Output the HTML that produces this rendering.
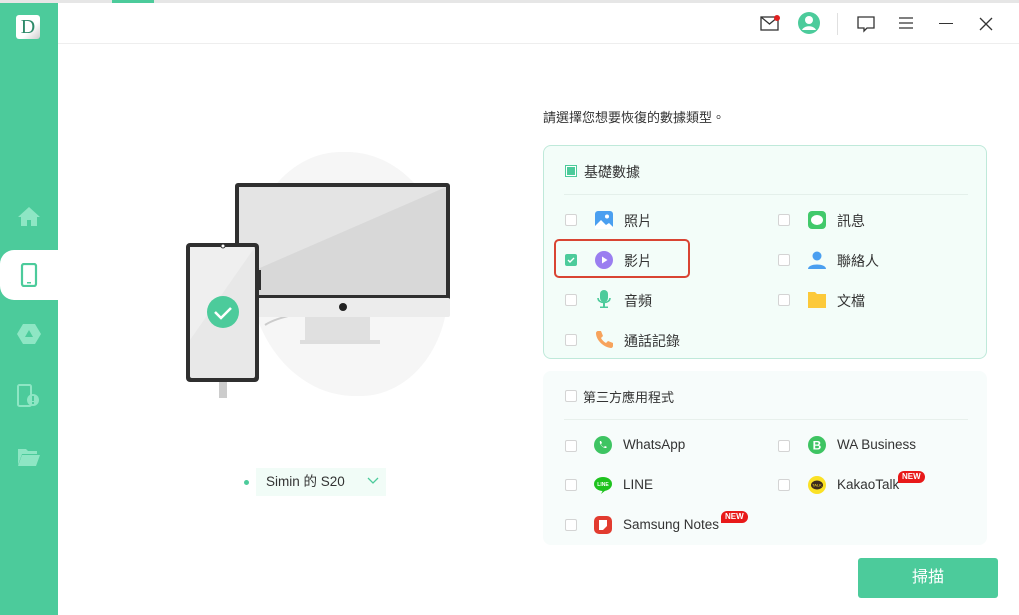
<!DOCTYPE html><html><head><meta charset="utf-8"><style>
*{margin:0;padding:0;box-sizing:border-box}
body{width:1019px;height:615px;overflow:hidden;background:#fff;font-family:"Liberation Sans","Noto Sans CJK TC",sans-serif;color:#333;position:relative}
.abs{position:absolute}
.cb{position:absolute;width:12px;height:12px;border:1px solid #d4d4d4;background:#fff;border-radius:2px}
.lbl{position:absolute;font-size:14px;color:#333}
.en{font-size:13.5px}
.ic{position:absolute;width:18px;height:18px}
.new{position:absolute;background:#e81919;color:#fff;font-size:8px;font-weight:bold;padding:1px 4px;border-radius:7px 7px 7px 0;line-height:10px}
</style></head><body>
<div class="abs" style="left:0;top:0;width:1019px;height:3px;background:#e6e6e6"></div>
<div class="abs" style="left:112px;top:0;width:42px;height:3px;background:#4ccb9b"></div>
<div class="abs" style="left:0;top:3px;width:58px;height:612px;background:#4ccb9b"></div>
<div class="abs" style="left:16px;top:15px;width:24px;height:24px;background:linear-gradient(135deg,#fff 60%,#ccc);border-radius:3px;font-family:'Liberation Serif',serif;font-size:20px;color:#2e8a6a;text-align:center;line-height:24px">D</div>
<div class="abs" style="left:58px;top:43px;width:961px;height:1px;background:#eee"></div>
<svg class="abs" style="left:17px;top:205px" width="24" height="24" viewBox="0 0 24 24"><path d="M12 2L1 12h3v9h6v-6h4v6h6v-9h3z" fill="#8ee6c4"/></svg>
<div class="abs" style="left:0;top:250px;width:58px;height:50px;background:#fff;border-radius:14px 0 0 14px"></div>
<svg class="abs" style="left:19px;top:263px" width="20" height="24" viewBox="0 0 20 24"><rect x="3" y="1" width="14" height="22" rx="2" fill="none" stroke="#4ccb9b" stroke-width="2.2"/><rect x="8" y="19" width="4" height="1.5" fill="#4ccb9b"/></svg>
<svg class="abs" style="left:16px;top:322px" width="26" height="24" viewBox="0 0 26 24"><path d="M7 2h12l6 10-6 10H7L1 12z" fill="#8ee6c4"/><path d="M13 8l4 7H9z" fill="#4ccb9b"/></svg>
<svg class="abs" style="left:16px;top:383px" width="26" height="26" viewBox="0 0 26 26"><rect x="2" y="2" width="13" height="21" rx="1.5" fill="none" stroke="#8ee6c4" stroke-width="2"/><circle cx="17" cy="17" r="6" fill="#8ee6c4"/><rect x="16" y="13" width="2" height="5" fill="#4ccb9b"/><rect x="16" y="19" width="2" height="2" fill="#4ccb9b"/></svg>
<svg class="abs" style="left:17px;top:446px" width="24" height="22" viewBox="0 0 24 22"><path d="M1 3h8l2 2h9v3H5L1 19z" fill="#8ee6c4"/><path d="M5 9h18l-4 11H1z" fill="#8ee6c4"/></svg>
<svg class="abs" style="left:760px;top:14px" width="22" height="18" viewBox="0 0 22 18"><rect x="1" y="3" width="17" height="13" fill="none" stroke="#333" stroke-width="1.3"/><path d="M1 3l8.5 7L18 3" fill="none" stroke="#333" stroke-width="1.3"/><circle cx="17" cy="4" r="3" fill="#e02020"/></svg>
<svg class="abs" style="left:798px;top:12px" width="22" height="22" viewBox="0 0 22 22"><circle cx="11" cy="11" r="11" fill="#4ccb9b"/><circle cx="11" cy="8" r="4" fill="#fff"/><path d="M4 18c2-5 12-5 14 0" fill="#fff"/></svg>
<div class="abs" style="left:837px;top:13px;width:1px;height:22px;background:#e0e0e0"></div>
<svg class="abs" style="left:856px;top:15px" width="20" height="18" viewBox="0 0 20 18"><path d="M2 2h16v11h-7l-3 3v-3H2z" fill="none" stroke="#333" stroke-width="1.3"/></svg>
<svg class="abs" style="left:897px;top:16px" width="18" height="14" viewBox="0 0 18 14"><path d="M2 2h14M2 7h14M2 12h14" stroke="#333" stroke-width="1.3"/></svg>
<div class="abs" style="left:939px;top:23px;width:14px;height:1.3px;background:#333"></div>
<svg class="abs" style="left:978px;top:16px" width="16" height="16" viewBox="0 0 16 16"><path d="M2 2l12 12M14 2L2 14" stroke="#333" stroke-width="1.3"/></svg>
<div class="abs" style="left:248px;top:152px;width:200px;height:244px;background:#f6f6f6;border-radius:48% 52% 45% 55%"></div>
<svg class="abs" style="left:170px;top:140px" width="300" height="270" viewBox="0 0 300 270">
<path d="M95 185 C110 175 140 172 175 165 L230 160" stroke="#ccc" stroke-width="2" fill="none"/>
<rect x="135" y="172" width="65" height="32" fill="#e0e0e0"/>
<rect x="130" y="200" width="80" height="4" fill="#ddd"/>
<rect x="65" y="43" width="215" height="118" rx="3" fill="#2f2f2f"/>
<rect x="69" y="47" width="207" height="108" fill="#d8d8d8"/>
<path d="M69 47h207l-207 90z" fill="#e4e4e4"/>
<rect x="65" y="158" width="215" height="19" rx="2" fill="#ececec"/>
<circle cx="173" cy="167" r="4" fill="#222"/>
<rect x="16" y="103" width="73" height="139" rx="4" fill="#2f2f2f"/>
<rect x="20" y="107" width="65" height="131" rx="2" fill="#e8e8e8"/>
<path d="M20 107h65L20 200z" fill="#efefef"/>
<circle cx="53" cy="106" r="2" fill="#fff" stroke="#2f2f2f"/>
<rect x="88" y="130" width="3" height="20" fill="#2f2f2f"/>
<rect x="49" y="242" width="8" height="16" fill="#ccc"/>
<circle cx="53" cy="172" r="16" fill="#4ccb9b"/>
<path d="M45 172l6 6 10-10" stroke="#fff" stroke-width="2.5" fill="none"/>
</svg>
<div class="abs" style="left:244px;top:480px;width:5px;height:5px;border-radius:50%;background:#4ccb9b"></div>
<div class="abs" style="left:256px;top:468px;width:130px;height:28px;background:#f1fcf7;font-size:13.5px;line-height:28px;padding-left:10px">Simin 的 S20</div>
<svg class="abs" style="left:367px;top:477px" width="12" height="8" viewBox="0 0 12 8"><path d="M1 1l5 5 5-5" stroke="#4ccb9b" stroke-width="1.3" fill="none"/></svg>
<div class="abs" style="left:543px;top:107px;font-size:13px;color:#333">請選擇您想要恢復的數據類型。</div>
<div class="abs" style="left:543px;top:145px;width:444px;height:214px;background:#f3fdf9;border:1px solid #bfe9da;border-radius:8px"></div>
<div class="abs" style="left:565px;top:165px;width:12px;height:12px;border:1px solid #4ccb9b;background:#fff"><div style="margin:1px;width:8px;height:8px;background:#4ccb9b"></div></div>
<div class="lbl" style="left:584px;top:162px">基礎數據</div>
<div class="abs" style="left:564px;top:194px;width:404px;height:1px;background:#e4f0eb"></div>
<div class="cb" style="left:565px;top:214px"></div>
<svg class="ic" style="left:595px;top:211px" viewBox="0 0 18 18"><rect width="18" height="18" rx="3" fill="#4a9ff0"/><circle cx="12" cy="5.5" r="2" fill="#fff"/><path d="M0 15l6-6 5 5 3-2 4 4v2H0z" fill="#fff"/></svg>
<div class="lbl" style="left:624px;top:211px">照片</div>
<div class="cb" style="left:778px;top:214px"></div>
<svg class="ic" style="left:808px;top:211px" viewBox="0 0 18 18"><rect width="18" height="18" rx="4" fill="#42c96b"/><ellipse cx="9" cy="9" rx="6" ry="5" fill="#fff"/></svg>
<div class="lbl" style="left:837px;top:211px">訊息</div>
<div class="abs" style="left:554px;top:239px;width:136px;height:39px;border:2.5px solid #d94433;border-radius:5px"></div>
<div class="abs" style="left:565px;top:254px;width:12px;height:12px;background:#4ccb9b;border-radius:2px"></div>
<svg class="abs" style="left:566px;top:255px" width="10" height="10" viewBox="0 0 10 10"><path d="M2 5l2 2 4-4" stroke="#fff" stroke-width="1.4" fill="none"/></svg>
<svg class="ic" style="left:595px;top:251px" viewBox="0 0 18 18"><circle cx="9" cy="9" r="9" fill="#9a7ef0"/><path d="M7 5.5v7l5.5-3.5z" fill="#fff"/></svg>
<div class="lbl" style="left:624px;top:251px">影片</div>
<div class="cb" style="left:778px;top:254px"></div>
<svg class="ic" style="left:808px;top:251px" viewBox="0 0 18 18"><circle cx="9" cy="5" r="4.5" fill="#4a9ff0"/><path d="M0 18c0-6 18-6 18 0z" fill="#4a9ff0"/></svg>
<div class="lbl" style="left:837px;top:251px">聯絡人</div>
<div class="cb" style="left:565px;top:294px"></div>
<svg class="ic" style="left:595px;top:290px" viewBox="0 0 18 18"><rect x="5" y="0" width="8" height="12" rx="4" fill="#4ccb9b"/><path d="M3 8c0 6 12 6 12 0" stroke="#4ccb9b" stroke-width="1.6" fill="none"/><rect x="8" y="13" width="2" height="4" fill="#4ccb9b"/><rect x="5" y="16.5" width="8" height="1.5" fill="#4ccb9b"/></svg>
<div class="lbl" style="left:624px;top:291px">音頻</div>
<div class="cb" style="left:778px;top:294px"></div>
<svg class="ic" style="left:808px;top:290px" viewBox="0 0 18 18"><path d="M0 2h7l2 2h9v14H0z" fill="#fcc93a"/></svg>
<div class="lbl" style="left:837px;top:291px">文檔</div>
<div class="cb" style="left:565px;top:334px"></div>
<svg class="ic" style="left:595px;top:330px" viewBox="0 0 18 18"><path d="M3 1l3 0 2 5-2 2c1 2 3 4 5 5l2-2 5 2v3c0 1-1 2-2 2C8 17 1 10 1 3c0-1 1-2 2-2z" fill="#f7a35c"/></svg>
<div class="lbl" style="left:624px;top:331px">通話記錄</div>
<div class="abs" style="left:543px;top:371px;width:444px;height:174px;background:#f7fcfb;border-radius:8px"></div>
<div class="cb" style="left:565px;top:390px"></div>
<div class="lbl" style="left:583px;top:387px;font-size:13px">第三方應用程式</div>
<div class="abs" style="left:564px;top:419px;width:404px;height:1px;background:#e8f0ec"></div>
<div class="cb" style="left:565px;top:440px"></div>
<svg class="ic" style="left:594px;top:436px" viewBox="0 0 18 18"><circle cx="9" cy="9" r="9" fill="#3ec462"/><path d="M6 5c-1 2 2 7 6 7l1-1-2-1-1 1c-1 0-3-2-3-3l1-1-1-2z" fill="#fff"/></svg>
<div class="lbl en" style="left:623px;top:437px">WhatsApp</div>
<div class="cb" style="left:778px;top:440px"></div>
<svg class="ic" style="left:808px;top:436px" viewBox="0 0 18 18"><circle cx="9" cy="9" r="9" fill="#3ec462"/><text x="9" y="13.5" font-size="12" font-weight="bold" fill="#fff" text-anchor="middle" font-family="Liberation Sans">B</text></svg>
<div class="lbl en" style="left:837px;top:437px">WA Business</div>
<div class="cb" style="left:565px;top:479px"></div>
<svg class="ic" style="left:594px;top:476px" viewBox="0 0 18 18"><ellipse cx="9" cy="8" rx="9" ry="7" fill="#1ec31e"/><path d="M9 14l-2 4 5-4z" fill="#1ec31e"/><text x="9" y="10" font-size="5" font-weight="bold" fill="#fff" text-anchor="middle" font-family="Liberation Sans">LINE</text></svg>
<div class="lbl en" style="left:623px;top:477px">LINE</div>
<div class="cb" style="left:778px;top:479px"></div>
<svg class="ic" style="left:808px;top:476px" viewBox="0 0 18 18"><circle cx="9" cy="9" r="9" fill="#fbe125"/><ellipse cx="9" cy="9" rx="6" ry="4.5" fill="#3c2a1e"/><text x="9" y="10.5" font-size="4" fill="#fbe125" text-anchor="middle" font-family="Liberation Sans">TALK</text></svg>
<div class="lbl en" style="left:837px;top:477px">KakaoTalk</div>
<div class="new" style="left:898px;top:471px">NEW</div>
<div class="cb" style="left:565px;top:519px"></div>
<svg class="ic" style="left:594px;top:516px" viewBox="0 0 18 18"><rect width="18" height="18" rx="5" fill="#e23b2f"/><path d="M5 4h8v6l-4 4H5z" fill="#fff"/></svg>
<div class="lbl en" style="left:623px;top:517px">Samsung Notes</div>
<div class="new" style="left:721px;top:511px">NEW</div>
<div class="abs" style="left:858px;top:558px;width:140px;height:40px;background:#4ccb9b;border-radius:3px;color:#fff;font-size:16px;text-align:center;line-height:40px">掃描</div>
</body></html>
